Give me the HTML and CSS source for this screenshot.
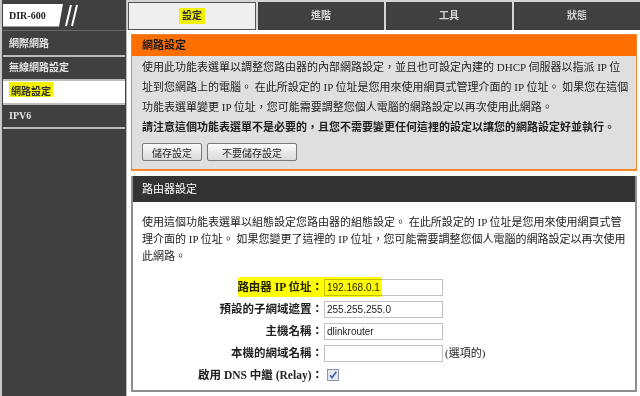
FILE: index.html
```html
<!DOCTYPE html>
<html lang="zh-Hant">
<head>
    <meta charset="UTF-8">
    <meta name="viewport" content="width=device-width, initial-scale=1.0">
    <title>DIR-600 網路設定</title>
    <link rel="stylesheet" href="styles.css">
</head>
<body>
    <div class="page">
        <div class="side">
            <div class="brand">
                <div class="logo">DIR-600</div>
                <svg class="slashes" width="16" height="26" viewBox="0 0 16 26">
                    <line x1="2" y1="24" x2="7" y2="3" stroke="#fff" stroke-width="2"/>
                    <line x1="8" y1="24" x2="13" y2="3" stroke="#fff" stroke-width="2"/>
                </svg>
            </div>
            <ul class="nav">
                <li>網際網路</li>
                <li>無線網路設定</li>
                <li class="active"><span class="hl-side">網路設定</span></li>
                <li>IPV6</li>
            </ul>
        </div>

        <div class="main">
            <div class="tabs">
                <div class="tab current"><span class="hl-tab">設定</span></div>
                <div class="tab">進階</div>
                <div class="tab">工具</div>
                <div class="tab">狀態</div>
            </div>

            <div class="content">
                <div class="box box-orange">
                    <h2>網路設定</h2>
                    <div class="body">
                        <p>使用此功能表選單以調整您路由器的內部網路設定，並且也可設定內建的 DHCP 伺服器以指派 IP 位<br>址到您網路上的電腦。 在此所設定的 IP 位址是您用來使用網頁式管理介面的 IP 位址。 如果您在這個<br>功能表選單變更 IP 位址，您可能需要調整您個人電腦的網路設定以再次使用此網路。</p>
                        <p class="strong">請注意這個功能表選單不是必要的，且您不需要變更任何這裡的設定以讓您的網路設定好並執行。</p>
                        <div class="actions">
                            <button class="btn">儲存設定</button>
                            <button class="btn wide">不要儲存設定</button>
                        </div>
                    </div>
                </div>

                <div class="box box-dark">
                    <h2>路由器設定</h2>
                    <div class="body">
                        <p>使用這個功能表選單以組態設定您路由器的組態設定。 在此所設定的 IP 位址是您用來使用網頁式管理介面的 IP 位址。 如果您變更了這裡的 IP 位址，您可能需要調整您個人電腦的網路設定以再次使用此網路。</p>
                        <div class="form">
                            <div class="row">
                                <label>路由器 IP 位址：</label>
                                <input class="field" type="text" value="192.168.0.1">
                                <span class="mark"></span>
                            </div>
                            <div class="row">
                                <label>預設的子網域遮置：</label>
                                <input class="field" type="text" value="255.255.255.0">
                            </div>
                            <div class="row">
                                <label>主機名稱：</label>
                                <input class="field" type="text" value="dlinkrouter">
                            </div>
                            <div class="row">
                                <label>本機的網域名稱：</label>
                                <input class="field" type="text" value="">
                                <span class="note">(選項的)</span>
                            </div>
                            <div class="row">
                                <label>啟用 DNS 中繼 (Relay)：</label>
                                <svg class="check" width="12" height="12" viewBox="0 0 12 12">
                                    <rect x="0.5" y="0.5" width="11" height="11" fill="#e3e7ef" stroke="#8d96a8"/>
                                    <path d="M3 6.2 L5 8.8 L9.3 2.8" fill="none" stroke="#3b5ca8" stroke-width="1.5"/>
                                </svg>
                            </div>
                        </div>
                    </div>
                </div>
            </div>
        </div>
    </div>
</body>
</html>
```

FILE: styles.css
```css
body {
    margin: 0;
    font-family: "Liberation Serif", "Noto Sans CJK TC", serif;
    color: #222;
    background-color: #fff;
}
.page {
    display: grid;
    grid-template-columns: 127px 1fr;
    width: 640px;
    height: 396px;
    overflow: hidden;
}

/* left column */
.side {
    background-color: #404040;
    border-left: 2px solid #c8c8c8;
    border-right: 1px solid #b8b8b8;
}
.brand {
    height: 30px;
    display: flex;
    align-items: center;
    padding-left: 1px;
    border-bottom: 1px solid #666;
}
.logo {
    width: 60px;
    height: 23px;
    box-sizing: border-box;
    padding-left: 6px;
    background-color: #fff;
    clip-path: polygon(0 0, 100% 0, calc(100% - 4px) 100%, 0 100%);
    font-weight: bold;
    font-size: 10px;
    line-height: 23px;
    color: #222;
}
.slashes {
    margin-left: 1px;
}
.nav {
    list-style: none;
    margin: 2px 1px 0;
    padding: 0;
}
.nav li {
    height: 22px;
    line-height: 22px;
    padding-left: 6px;
    border-bottom: 2px solid #bdbdbd;
    font-size: 10px;
    font-weight: bold;
    color: #e4e4e4;
}
.nav li.active {
    background-color: #fff;
    color: #333;
}
.hl-side {
    background-color: #f2f200;
    padding: 4px 2px 0;
}

/* tabs */
.tabs {
    display: flex;
    gap: 2px;
    padding: 2px 0 0 1px;
    background-color: #d4d4d4;
}
.tab {
    flex: 1;
    height: 28px;
    line-height: 28px;
    box-sizing: border-box;
    text-align: center;
    background-color: #404040;
    color: #d6d6d6;
    font-size: 10px;
    font-weight: bold;
}
.tab.current {
    background-color: #efefef;
    border: 1px solid #555;
    line-height: 26px;
    color: #333;
}
.hl-tab {
    display: inline-block;
    line-height: 16px;
    padding: 0 3px;
    background-color: #f2f200;
}

/* boxes */
.content {
    padding: 4px 3px 0 4px;
}
.box h2 {
    margin: 0;
    font-size: 11px;
}
.box p {
    margin: 0;
}
.box-orange {
    border: 1px solid #f7862b;
    border-bottom-width: 2px;
    background-color: #dfdfdf;
}
.box-orange h2 {
    height: 21px;
    line-height: 21px;
    padding-left: 10px;
    background-color: #ff6f00;
    color: #1a1a1a;
}
.box-orange .body {
    padding: 1px 0 8px 10px;
    font-size: 11px;
    line-height: 20px;
}
.strong {
    font-weight: bold;
}
.actions {
    display: flex;
    gap: 5px;
    margin-top: 6px;
}
.btn {
    height: 18px;
    padding: 0 9px;
    font-family: "Liberation Sans", "Noto Sans CJK TC", sans-serif;
    font-size: 10px;
    color: #222;
    border: 1px solid #7a7a7a;
    border-radius: 2px;
    background: linear-gradient(#fbfbfb, #dadada);
}
.btn.wide {
    padding: 0 14px;
}
.box-dark {
    margin-top: 5px;
    border: 2px solid #8f8f8f;
    border-top: 0;
}
.box-dark h2 {
    height: 26px;
    line-height: 26px;
    padding-left: 9px;
    background-color: #333;
    color: #fff;
    font-weight: normal;
}
.box-dark .body {
    padding: 12px 9px 4px 9px;
    font-size: 11px;
    line-height: 17px;
}

/* form */
.form {
    margin-top: 11px;
}
.row {
    position: relative;
    display: flex;
    align-items: center;
    height: 22px;
}
.row label {
    width: 181px;
    text-align: right;
    font-size: 11.5px;
    font-weight: bold;
}
.field {
    width: 119px;
    height: 17px;
    box-sizing: border-box;
    margin: 0 0 0 1px;
    padding: 0 2px;
    border: 1px solid #c2c2c2;
    font-family: "Liberation Sans", Arial, sans-serif;
    font-size: 10px;
    color: #222;
}
.note {
    margin-left: 2px;
    font-size: 11px;
}
.check {
    margin-left: 4px;
}
.mark {
    position: absolute;
    left: 96px;
    top: 1px;
    width: 144px;
    height: 20px;
    border-radius: 2px;
    background-color: #ffff00;
    mix-blend-mode: multiply;
}
```
